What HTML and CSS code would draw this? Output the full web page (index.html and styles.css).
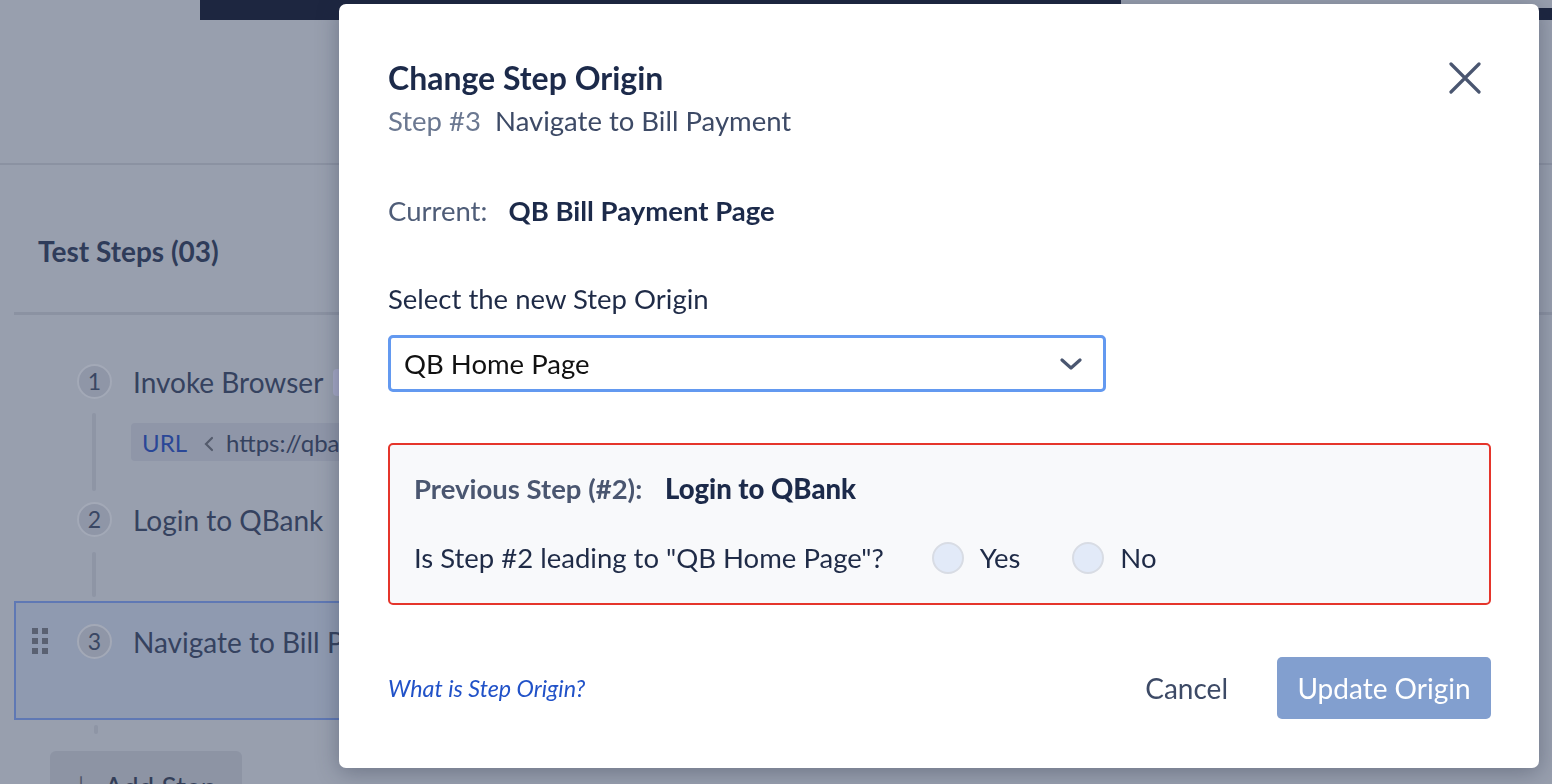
FILE: index.html
```html
<!DOCTYPE html>
<html lang="en">
<head>
    <meta charset="UTF-8">
    <meta name="viewport" content="width=device-width, initial-scale=1.0">
    <title>Change Step Origin</title>
    <link rel="stylesheet" href="styles.css">
</head>
<body>
    <header class="topbar">
        <div class="topbar-tab"></div>
        <div class="topbar-rest"></div>
    </header>
    <section class="top-area"></section>

    <main class="steps-panel">
        <h2 class="steps-title">Test Steps (03)</h2>
        <ul class="steps">
            <li class="step">
                <span class="handle"></span>
                <span class="num">1</span>
                <div class="step-body">
                    <div class="step-name">Invoke Browser <span class="tag"></span></div>
                </div>
            </li>
            <li class="step step-arg">
                <span class="handle"><i class="rail rail-long"></i></span>
                <span class="num-gap"></span>
                <div class="arg">
                    <span class="arg-key">URL</span>
                    <svg class="arg-sep" width="10" height="16" viewBox="0 0 10 16">
                        <path d="M8 2 L2 8 L8 14" stroke="#545b6c" stroke-width="2.2" fill="none" stroke-linecap="round"/>
                    </svg>
                    <span class="arg-val">https://qbank.example.com</span>
                </div>
            </li>
            <li class="step">
                <span class="handle"></span>
                <span class="num">2</span>
                <div class="step-body">
                    <div class="step-name">Login to QBank</div>
                </div>
            </li>
            <li class="step step-spacer">
                <span class="handle"><i class="rail rail-mid"></i></span>
            </li>
            <li class="step step-active">
                <span class="handle">
                    <span class="dots">
                        <i></i><i></i><i></i><i></i><i></i><i></i>
                    </span>
                </span>
                <span class="num">3</span>
                <div class="step-body">
                    <div class="step-name">Navigate to Bill Payment</div>
                </div>
            </li>
        </ul>
        <div class="rail-tail"></div>
        <button class="add-step"><span class="plus">+</span> Add Step</button>
    </main>

    <div class="modal">
        <div class="modal-head">
            <div>
                <h1 class="modal-title">Change Step Origin</h1>
                <p class="modal-sub"><span class="muted">Step #3</span>&nbsp; Navigate to Bill Payment</p>
            </div>
            <button class="close" aria-label="Close">
                <svg width="32" height="32" viewBox="0 0 32 32">
                    <path d="M2 2 L30 30 M30 2 L2 30" stroke="#4a5670" stroke-width="3.2" stroke-linecap="round" fill="none"/>
                </svg>
            </button>
        </div>

        <p class="current"><span class="current-label">Current:</span> <strong>QB Bill Payment Page</strong></p>

        <label class="select-label" for="origin">Select the new Step Origin</label>
        <div class="select">
            <span id="origin">QB Home Page</span>
            <svg width="24" height="14" viewBox="0 0 24 14">
                <path d="M3 3 L12 11 L21 3" stroke="#4a5670" stroke-width="3.2" stroke-linecap="round" stroke-linejoin="round" fill="none"/>
            </svg>
        </div>

        <div class="warning">
            <p class="prev"><span class="prev-label">Previous Step (#2):</span> <strong>Login to QBank</strong></p>
            <div class="question">
                <span class="q-text">Is Step #2 leading to "QB Home Page"?</span>
                <label class="radio"><span class="dot"></span>Yes</label>
                <label class="radio"><span class="dot"></span>No</label>
            </div>
        </div>

        <div class="modal-foot">
            <a class="help" href="#">What is Step Origin?</a>
            <div class="actions">
                <button class="cancel">Cancel</button>
                <button class="primary">Update Origin</button>
            </div>
        </div>
    </div>
</body>
</html>
```

FILE: styles.css
```css
* {
    padding: 0px;
    margin: 0px;
    box-sizing: border-box;
    font-family: Lato, "Open Sans", Arial, sans-serif;
}
:root {
    --navy: #1c2a4a;
    --slate: #3d4a66;
    --gray: #6b7891;
    --icon: #4a5670;
    --dim-bg: #989fae;
    --dim-line: #8b92a2;
    --dim-text: #2f3c5a;
}
body {
    width: 1552px;
    height: 784px;
    overflow: hidden;
    background-color: var(--dim-bg);
}
button {
    border: none;
    background: none;
    cursor: pointer;
}

/* page behind the overlay (already dimmed) */
.topbar {
    display: flex;
    height: 20px;
}
.topbar-tab {
    width: 921px;
    margin-left: 200px;
    background-color: #1d2640;
}
.topbar-rest {
    flex: 1;
    margin-top: 8px;
    background-color: #1d2640;
}
.top-area {
    height: 145px;
    border-bottom: 2px solid var(--dim-line);
}
.steps-panel {
    margin-left: 14px;
}
.steps-title {
    padding: 71px 0 46px 24px;
    line-height: 30px;
    font-size: 28px;
    font-weight: 700;
    color: var(--dim-text);
    border-bottom: 3px solid var(--dim-line);
}
.steps {
    list-style: none;
    margin-top: 48px;
    width: 900px;
}
.step {
    display: flex;
    align-items: center;
}
.handle {
    width: 63px;
    flex-shrink: 0;
    align-self: stretch;
    display: flex;
    justify-content: center;
    align-items: center;
    position: relative;
}
.num {
    width: 35px;
    height: 35px;
    border-radius: 50%;
    background-color: #8f96a7;
    border: 2px solid #a3a9b7;
    color: #3a4763;
    font-size: 23px;
    display: flex;
    align-items: center;
    justify-content: center;
    flex-shrink: 0;
}
.num-gap {
    width: 35px;
    flex-shrink: 0;
}
.step-body {
    margin-left: 21px;
    white-space: nowrap;
}
.step-name {
    font-size: 28px;
    line-height: 34px;
    margin-top: 2px;
    color: #35425f;
    display: flex;
    align-items: center;
    gap: 10px;
}
.tag {
    display: inline-block;
    width: 40px;
    height: 27px;
    border-radius: 4px;
    background-color: #a5a8c6;
}
.step-arg {
    height: 102px;
    align-items: flex-start;
}
.rail {
    position: absolute;
    left: 78px;
    width: 4px;
    border-radius: 2px;
    background-color: #8e95a5;
}
.rail-long {
    top: 14px;
    height: 78px;
}
.rail-mid {
    top: 15px;
    height: 45px;
}
.arg {
    margin: 24px 0 0 19px;
    height: 38px;
    width: 300px;
    padding-left: 11px;
    border-radius: 4px 0 0 4px;
    background-color: #8f96a8;
    display: flex;
    align-items: center;
    font-size: 24px;
    white-space: nowrap;
    overflow: hidden;
}
.arg-key {
    color: #2a4797;
}
.arg-sep {
    flex-shrink: 0;
    margin: 3px 12px 0 17px;
}
.arg-val {
    color: #35425f;
}
.step-spacer {
    height: 64px;
}
.step-active {
    height: 119px;
    width: 340px;
    padding-bottom: 39px;
    background-color: #8f9ab0;
    border: 2px solid #5f78b4;
    border-right: none;
}
.step-active .handle {
    width: 61px;
    justify-content: flex-start;
    padding-left: 16px;
}
.dots {
    display: grid;
    grid-template-columns: 6px 6px;
    gap: 4px 4px;
}
.dots i {
    width: 6px;
    height: 6px;
    background-color: #5a6172;
}
.rail-tail {
    width: 4px;
    height: 9px;
    margin: 5px 0 0 80px;
    border-radius: 2px;
    background-color: #8e95a5;
}
.add-step {
    margin: 17px 0 0 36px;
    width: 192px;
    height: 60px;
    border-radius: 6px;
    background-color: #8d94a4;
    color: #333e58;
    font-size: 28px;
    text-align: left;
    padding: 4px 0 0 20px;
    white-space: nowrap;
}
.plus {
    font-size: 38px;
    font-weight: 300;
    color: #4f5668;
    margin-right: 6px;
}

/* modal */
.modal {
    position: fixed;
    left: 339px;
    top: 4px;
    width: 1200px;
    height: 764px;
    padding: 56px 48px 49px 49px;
    background-color: #ffffff;
    border-radius: 7px;
    box-shadow: 0 4px 22px rgba(30, 38, 60, 0.35);
}
.modal-head {
    display: flex;
    justify-content: space-between;
    align-items: flex-start;
}
.modal-title {
    font-size: 32px;
    line-height: 36px;
    font-weight: 700;
    color: var(--navy);
}
.modal-sub {
    margin-top: 10px;
    font-size: 27.5px;
    line-height: 30px;
    color: var(--slate);
}
.muted {
    color: var(--gray);
}
.close {
    margin: 2px 10px 0 0;
    width: 32px;
    height: 32px;
}
.current {
    margin-top: 60px;
    font-size: 27.5px;
    line-height: 30px;
    color: #4f5d78;
}
.current strong {
    margin-left: 14px;
    color: var(--navy);
}
.select-label {
    display: block;
    margin-top: 58px;
    font-size: 27.5px;
    line-height: 30px;
    color: #1f2b47;
}
.select {
    margin-top: 21px;
    width: 718px;
    height: 57px;
    border: 3px solid #6399f0;
    border-radius: 5px;
    display: flex;
    align-items: center;
    justify-content: space-between;
    padding: 0 20px 0 13px;
    font-size: 27.5px;
    color: #111111;
}
.warning {
    margin-top: 51px;
    height: 162px;
    border: 2px solid #e5352b;
    border-radius: 5px;
    background-color: #f8f9fb;
    padding: 29px 26px 0 24px;
}
.prev {
    font-size: 27.5px;
    line-height: 30px;
    font-weight: 700;
    color: var(--navy);
}
.prev-label {
    color: #4a5670;
    margin-right: 16px;
}
.question {
    margin-top: 38px;
    display: flex;
    align-items: center;
    font-size: 27.5px;
    line-height: 30px;
    color: #1f2b47;
}
.q-text {
    margin-right: 48px;
}
.radio {
    display: flex;
    align-items: center;
    gap: 16px;
    margin-right: 52px;
}
.dot {
    width: 32px;
    height: 32px;
    border-radius: 50%;
    background-color: #e2eaf8;
    border: 2px solid #d8dce4;
}
.modal-foot {
    margin-top: 52px;
    display: flex;
    justify-content: space-between;
    align-items: center;
}
.help {
    font-size: 23.3px;
    font-style: italic;
    color: #2152c8;
    text-decoration: none;
}
.actions {
    display: flex;
    align-items: center;
    gap: 49px;
}
.cancel {
    font-size: 28px;
    color: var(--slate);
}
.primary {
    width: 214px;
    height: 62px;
    border-radius: 5px;
    background-color: #829fcf;
    color: #ffffff;
    font-size: 28px;
}
```
